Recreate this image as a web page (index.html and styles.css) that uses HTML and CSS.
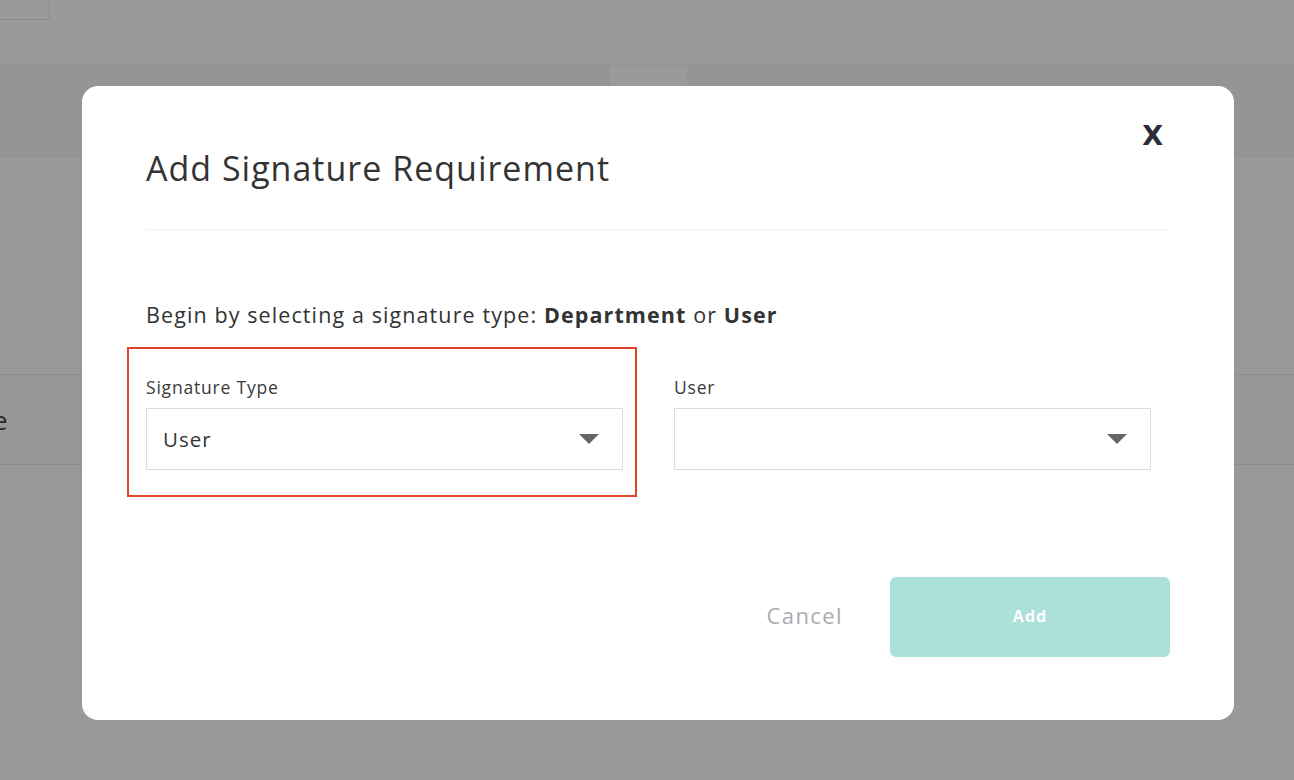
FILE: index.html
```html
<!DOCTYPE html>
<html>
<head>
<meta charset="utf-8">
<link rel="stylesheet" href="styles.css">
</head>
<body>
<div class="page">
  <div class="top"><div class="tab"></div></div>
  <div class="band band-a"><div class="col"></div></div>
  <div class="gap"></div>
  <div class="band band-b"><span class="peek">e</span></div>
</div>

<div class="modal">
  <button class="close">X</button>
  <h1 class="title">Add Signature Requirement</h1>
  <p class="intro">Begin by selecting a signature type: <b>Department</b> or <b>User</b></p>
  <div class="fields">
    <div class="field">
      <div class="highlight"></div>
      <label class="label">Signature Type</label>
      <div class="select"><span>User</span><span class="caret"></span></div>
    </div>
    <div class="field">
      <label class="label">User</label>
      <div class="select"><span></span><span class="caret"></span></div>
    </div>
  </div>
  <div class="actions">
    <span class="cancel">Cancel</span>
    <button class="add">Add</button>
  </div>
</div>
</body>
</html>
```

FILE: styles.css
```css
* { box-sizing: border-box; }
html, body { margin: 0; padding: 0; }
body {
  width: 1294px;
  height: 780px;
  overflow: hidden;
  background: #999999;
  font-family: "Open Sans", Lato, sans-serif;
  color: #333333;
  position: relative;
}
.page { display: flex; flex-direction: column; }
.top { height: 66px; background: #9a9a9a; border-bottom: 1px solid #8f9092; }
.tab { width: 50px; height: 20px; border: 1px solid #8c8c8c; border-left: none; border-top: none; }
.band-a { height: 91px; background: #949596; border-bottom: 1px solid #8f9092; display: flex; }
.band-a .col { margin-left: 610px; width: 77px; background: #9a9a9a; }
.gap { height: 217px; background: #999999; }
.band { position: relative; }
.band-b { height: 91px; background: #979797; border-top: 1px solid #8c8c8c; border-bottom: 1px solid #8c8c8c; display: flex; align-items: center; }
.peek { font-size: 26px; color: #2a2a2a; margin-left: -7px; }

.modal {
  position: absolute;
  left: 82px;
  top: 86px;
  width: 1152px;
  height: 634px;
  background: #fff;
  border-radius: 16px;
  padding: 62px 64px 63px;
  display: flex;
  flex-direction: column;
}
.close {
  position: absolute;
  right: 71px;
  top: 34px;
  border: none;
  background: none;
  padding: 0;
  font-family: "DejaVu Sans", sans-serif;
  font-weight: bold;
  font-size: 27px;
  color: #2c2b38;
}
.title {
  margin: 0;
  font-size: 34px;
  line-height: 40px;
  font-weight: 400;
  letter-spacing: 1px;
  color: #333;
  padding-bottom: 41px;
  border-bottom: 1px solid #f0f0f0;
}
.intro {
  margin: 70px 0 0;
  font-size: 21.5px;
  line-height: 30px;
  letter-spacing: 1.1px;
}
.intro b { font-weight: 700; }
.fields {
  margin-top: 46px;
  display: grid;
  grid-template-columns: 477px 477px;
  column-gap: 51px;
}
.field { position: relative; display: flex; flex-direction: column; }
.highlight {
  position: absolute;
  left: -19px;
  right: -14px;
  top: -29px;
  bottom: -27px;
  border: 2px solid #e0432c;
}
.label { font-size: 17.5px; line-height: 22px; margin-bottom: 10px; color: #3a3a3a; letter-spacing: 0.8px; }
.select {
  height: 62px;
  border: 1px solid #dcdcdc;
  display: flex;
  align-items: center;
  justify-content: space-between;
  padding: 0 23px 0 16px;
  font-size: 20.5px;
  letter-spacing: 1px;
}
.caret {
  width: 0; height: 0;
  border-left: 10px solid transparent;
  border-right: 10px solid transparent;
  border-top: 10px solid #666;
}
.actions {
  margin-top: auto;
  display: flex;
  justify-content: flex-end;
  align-items: center;
  gap: 47px;
}
.cancel { font-size: 22px; color: #abaab2; letter-spacing: 1.4px; padding-bottom: 5px; }
.add {
  width: 280px;
  height: 80px;
  border: none;
  border-radius: 6px;
  background: #ace1da;
  color: #fff;
  font-family: "Open Sans", sans-serif;
  font-weight: 700;
  font-size: 16px;
  letter-spacing: 1px;
  padding: 0 0 3px;
}
```
